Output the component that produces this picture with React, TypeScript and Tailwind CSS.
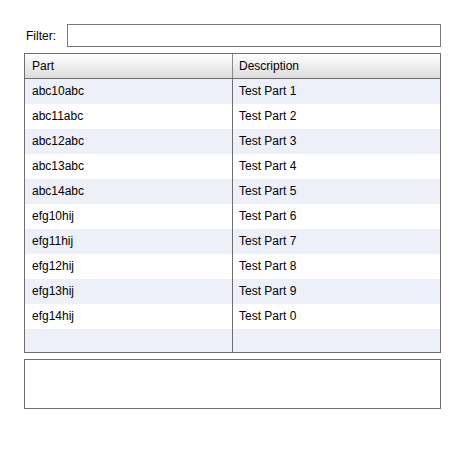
import React, { useState } from 'react';

const parts = [
  ['abc10abc', 'Test Part 1'],
  ['abc11abc', 'Test Part 2'],
  ['abc12abc', 'Test Part 3'],
  ['abc13abc', 'Test Part 4'],
  ['abc14abc', 'Test Part 5'],
  ['efg10hij', 'Test Part 6'],
  ['efg11hij', 'Test Part 7'],
  ['efg12hij', 'Test Part 8'],
  ['efg13hij', 'Test Part 9'],
  ['efg14hij', 'Test Part 0'],
];

export default function App() {
  const [filter, setFilter] = useState('');

  return (
    <div className="w-[465px] h-[465px] bg-white pt-[24px] pl-[24px] text-[12px] text-black" style={{ fontFamily: '"Liberation Sans", Arial, sans-serif' }}>
      <div className="w-[417px] flex flex-col">
        <div className="flex items-center h-[23px]">
          <label htmlFor="filter" className="w-[43px] pl-[2px]">Filter:</label>
          <input
            id="filter"
            value={filter}
            onChange={(e) => setFilter(e.target.value)}
            className="flex-1 h-[23px] border border-[#7a7a7a] bg-white px-1 outline-none"
          />
        </div>

        <div className="mt-[6px] border border-[#6e6e6e] h-[300px] flex flex-col">
          <div className="flex h-[25px] border-b border-[#6e6e6e] bg-gradient-to-b from-white to-[#dcdcdc]">
            <div className="w-[208px] border-r border-[#8a8a8a] pl-[7px] flex items-center">Part</div>
            <div className="flex-1 pl-[6px] flex items-center">Description</div>
          </div>
          {parts.map(([part, desc], i) => (
            <div key={part} className={`flex h-[25px] ${i % 2 === 0 ? 'bg-[#edf0f8]' : 'bg-white'}`}>
              <div className="w-[208px] border-r border-[#6e6e6e] pl-[7px] pb-[1px] flex items-center">{part}</div>
              <div className="flex-1 pl-[6px] pb-[1px] flex items-center">{desc}</div>
            </div>
          ))}
          <div className="flex flex-1 bg-[#edf0f8]">
            <div className="w-[208px] border-r border-[#6e6e6e]" />
            <div className="flex-1" />
          </div>
        </div>

        <div className="mt-[6px] h-[50px] border border-[#6e6e6e] bg-white" />
      </div>
    </div>
  );
}
